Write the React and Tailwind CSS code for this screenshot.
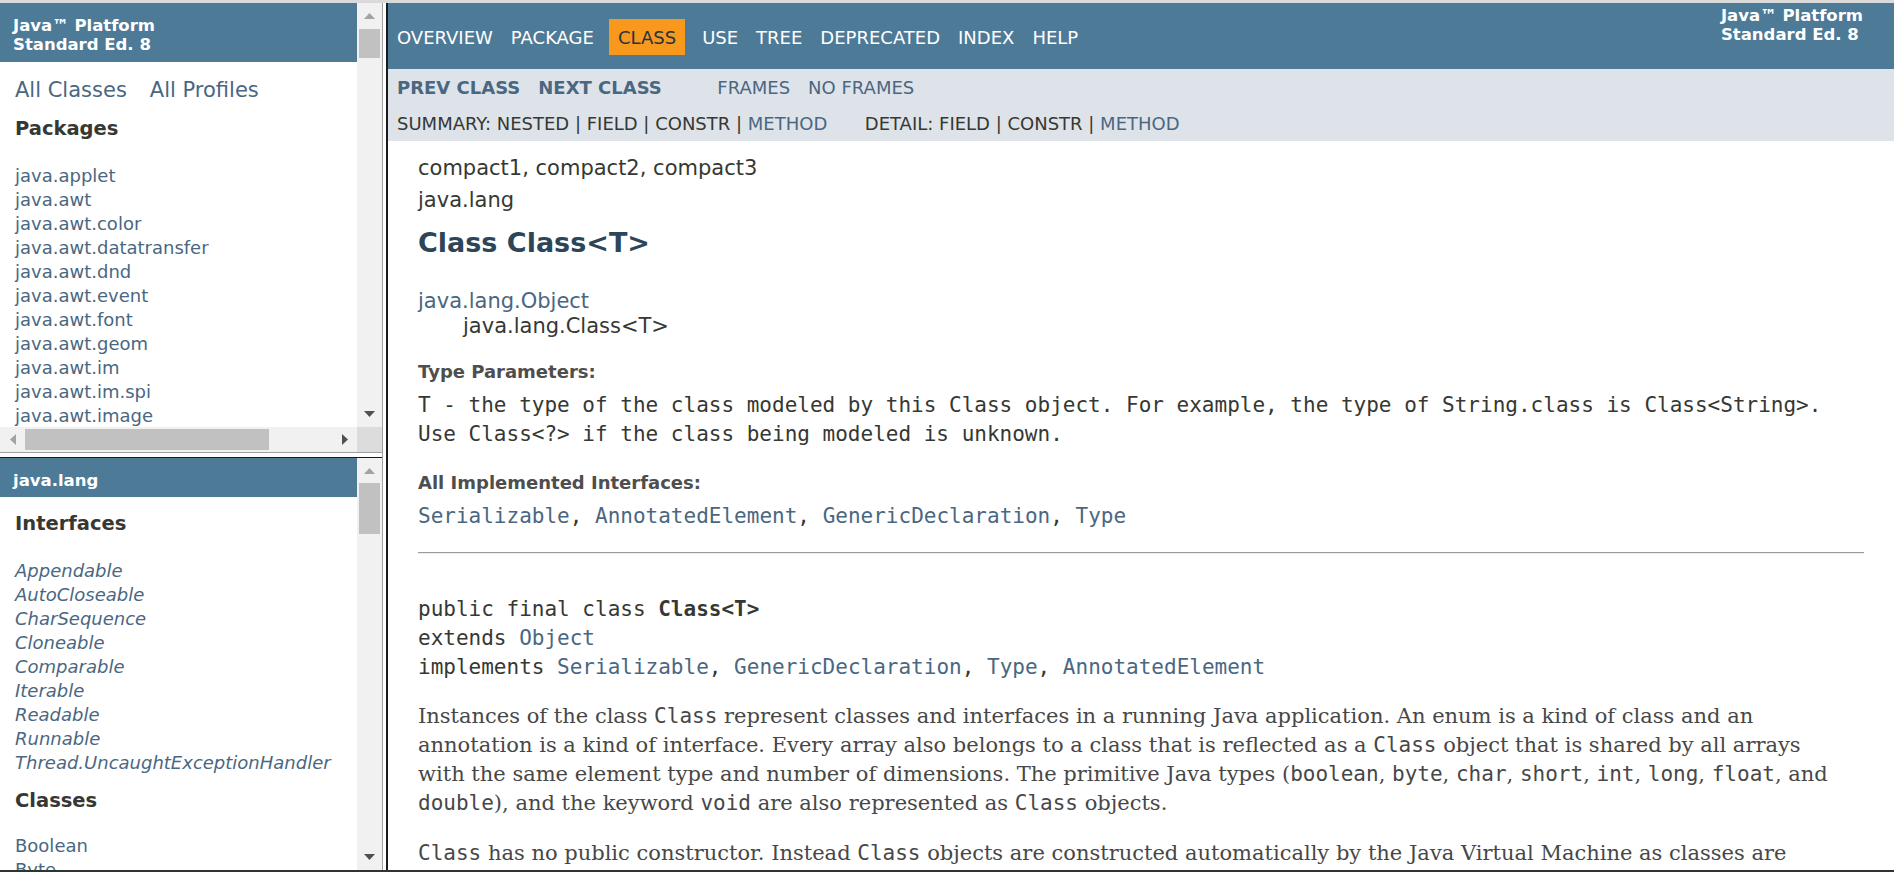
import React from 'react';

const packages = [
  'java.applet',
  'java.awt',
  'java.awt.color',
  'java.awt.datatransfer',
  'java.awt.dnd',
  'java.awt.event',
  'java.awt.font',
  'java.awt.geom',
  'java.awt.im',
  'java.awt.im.spi',
  'java.awt.image',
];

const interfaces = [
  'Appendable',
  'AutoCloseable',
  'CharSequence',
  'Cloneable',
  'Comparable',
  'Iterable',
  'Readable',
  'Runnable',
  'Thread.UncaughtExceptionHandler',
];

const classes = ['Boolean', 'Byte', 'Character'];

const navItems = ['Overview', 'Package', 'Class', 'Use', 'Tree', 'Deprecated', 'Index', 'Help'];

// small scrollbar triangles
const Arrow = ({ dir, dark }) => {
  const fill = dark ? '#505050' : '#a3a3a3';
  if (dir === 'up') return <svg width="11" height="6" viewBox="0 0 11 6"><polygon points="0,6 5.5,0 11,6" fill={fill} /></svg>;
  if (dir === 'down') return <svg width="11" height="6" viewBox="0 0 11 6"><polygon points="0,0 5.5,6 11,0" fill={fill} /></svg>;
  if (dir === 'left') return <svg width="6" height="11" viewBox="0 0 6 11"><polygon points="6,0 0,5.5 6,11" fill={fill} /></svg>;
  return <svg width="6" height="11" viewBox="0 0 6 11"><polygon points="0,0 6,5.5 0,11" fill={fill} /></svg>;
};

const VScroll = ({ thumb }) => (
  <div className="w-[25px] shrink-0 bg-[#f1f1f1] flex flex-col">
    <div className="h-[26px] flex items-center justify-center">
      <Arrow dir="up" />
    </div>
    <div className="flex-1 px-[2px]">
      <div className={thumb + ' bg-[#c1c1c1]'} />
    </div>
    <div className="h-[26px] flex items-center justify-center">
      <Arrow dir="down" dark />
    </div>
  </div>
);

const Code = ({ children, bold }) => (
  <code className={"font-['DejaVu_Sans_Mono',monospace] text-[21px] " + (bold ? 'font-bold' : '')}>{children}</code>
);

const LeftTop = () => (
  <div className="h-[449px] flex flex-col bg-white">
    <div className="flex flex-1 min-h-0">
      <div className="flex-1 overflow-hidden">
        <div className="bg-[#4d7a97] text-white font-bold text-[16.5px] leading-[19px] pt-[13px] pb-[7px] pl-[13px] h-[59px]">
          <div>Java™ Platform</div>
          <div>Standard Ed. 8</div>
        </div>
        <div className="pl-[15px] pt-[15.5px] text-[21px] leading-[24px] text-[#4a6782] flex gap-[23px]">
          <span>All Classes</span>
          <span>All Profiles</span>
        </div>
        <h2 className="pl-[15px] mt-[15px] text-[19.5px] leading-[23px] font-bold text-[#353833]">Packages</h2>
        <ul className="pl-[15px] mt-[24px] text-[18px] leading-[24px] text-[#4a6782]">
          {packages.map((p) => (
            <li key={p}>{p}</li>
          ))}
        </ul>
      </div>
      <VScroll thumb="h-[29px]" />
    </div>
    <div className="h-[25px] flex bg-[#f1f1f1]">
      <div className="w-[25px] flex items-center justify-center">
        <Arrow dir="left" />
      </div>
      <div className="w-[244px] py-[2px]">
        <div className="h-full bg-[#c1c1c1]" />
      </div>
      <div className="flex-1" />
      <div className="w-[25px] flex items-center justify-center">
        <Arrow dir="right" dark />
      </div>
      <div className="w-[25px] bg-[#dcdcdc]" />
    </div>
  </div>
);

const LeftBottom = () => (
  <div className="flex-1 flex min-h-0 bg-white">
    <div className="flex-1 overflow-hidden">
      <div className="bg-[#4d7a97] text-white font-bold text-[16.5px] leading-[19px] pt-[13px] pl-[13px] h-[39px]">java.lang</div>
      <h2 className="pl-[15px] mt-[15px] text-[19.5px] leading-[23px] font-bold text-[#353833]">Interfaces</h2>
      <ul className="pl-[15px] mt-[24px] text-[18px] leading-[24px] text-[#4a6782] italic">
        {interfaces.map((p) => (
          <li key={p}>{p}</li>
        ))}
      </ul>
      <h2 className="pl-[15px] mt-[14px] text-[19.5px] leading-[23px] font-bold text-[#353833]">Classes</h2>
      <ul className="pl-[15px] mt-[22px] text-[18px] leading-[24px] text-[#4a6782]">
        {classes.map((p) => (
          <li key={p}>{p}</li>
        ))}
      </ul>
    </div>
    <VScroll thumb="mt-[-1px] h-[51px]" />
  </div>
);

const TopNav = () => (
  <div className="bg-[#4d7a97] h-[66px] flex justify-between text-white shrink-0">
    <ul className="flex pt-[16px] text-[18px] leading-[21px] uppercase">
      {navItems.map((n) =>
        n === 'Class' ? (
          <li key={n} className="px-[9px] py-[7.5px] h-[36px] ml-[6px] mr-[8px] bg-[#f8981d] text-[#253441]">
            {n}
          </li>
        ) : (
          <li key={n} className="px-[9px] py-[7.5px] h-[36px]">
            {n}
          </li>
        )
      )}
    </ul>
    <div className="mt-[2.5px] mr-[31px] font-bold text-[16.5px] leading-[19px]">
      <div>Java™ Platform</div>
      <div>Standard Ed. 8</div>
    </div>
  </div>
);

const SubNav = () => (
  <div className="bg-[#dee3e9] h-[72px] shrink-0 text-[18px] leading-[21px] uppercase">
    <div className="h-[36px] flex items-center">
      <ul className="flex mr-[37.5px] font-bold text-[#4a6782]">
        <li className="px-[9px]">Prev Class</li>
        <li className="px-[9px]">Next Class</li>
      </ul>
      <ul className="flex text-[#4a6782]">
        <li className="px-[9px]">Frames</li>
        <li className="px-[9px]">No Frames</li>
      </ul>
    </div>
    <div className="pt-[8px] pl-[9px] flex text-[#353833] whitespace-pre">
      <div className="mr-[37.5px]">
        Summary: Nested | Field | Constr | <span className="text-[#4a6782]">Method</span>
      </div>
      <div>
        Detail: Field | Constr | <span className="text-[#4a6782]">Method</span>
      </div>
    </div>
  </div>
);

const Content = () => (
  <div className="flex-1 overflow-hidden px-[30px] text-[#353833]">
    <div className="mt-[15px] text-[21px] leading-[24px]">compact1, compact2, compact3</div>
    <div className="mt-[8px] text-[21px] leading-[24px]">java.lang</div>
    <h2 className="mt-[14.5px] text-[27px] leading-[31px] font-bold text-[#2c4557]">Class Class&lt;T&gt;</h2>

    <div className="mt-[31px] text-[21px] leading-[24px] text-[#4a6782]">java.lang.Object</div>
    <div className="mt-[1px] pl-[45px] text-[21px] leading-[24px]">java.lang.Class&lt;T&gt;</div>

    <div className="mt-[23px] text-[18px] leading-[21px] font-bold text-[#4e4e4e]">Type Parameters:</div>
    <div className="mt-[9px] font-['DejaVu_Sans_Mono',monospace] text-[21px] leading-[29px] whitespace-pre">
      <div>T - the type of the class modeled by this Class object. For example, the type of String.class is Class&lt;String&gt;.</div>
      <div>Use Class&lt;?&gt; if the class being modeled is unknown.</div>
    </div>

    <div className="mt-[23px] text-[18px] leading-[21px] font-bold text-[#4e4e4e]">All Implemented Interfaces:</div>
    <div className="mt-[9px] font-['DejaVu_Sans_Mono',monospace] text-[21px] leading-[29px] whitespace-pre">
      <span className="text-[#4a6782]">Serializable</span>, <span className="text-[#4a6782]">AnnotatedElement</span>,{' '}
      <span className="text-[#4a6782]">GenericDeclaration</span>, <span className="text-[#4a6782]">Type</span>
    </div>

    <hr className="mt-[21px] border-t border-t-[#9a9a9a] border-b border-b-[#eeeeee]" />

    <pre className="mt-[41.5px] font-['DejaVu_Sans_Mono',monospace] text-[21px] leading-[29px] text-[#353833]">
      <div>
        public final class <span className="font-bold">Class&lt;T&gt;</span>
      </div>
      <div>
        extends <span className="text-[#4a6782]">Object</span>
      </div>
      <div>
        implements <span className="text-[#4a6782]">Serializable</span>, <span className="text-[#4a6782]">GenericDeclaration</span>,{' '}
        <span className="text-[#4a6782]">Type</span>, <span className="text-[#4a6782]">AnnotatedElement</span>
      </div>
    </pre>

    <div className="mt-[20px] font-['DejaVu_Serif',Georgia,serif] text-[21px] leading-[29px] text-[#474747] whitespace-nowrap">
      <div>
        Instances of the class <Code>Class</Code> represent classes and interfaces in a running Java application. An enum is a kind of class and an
      </div>
      <div>
        annotation is a kind of interface. Every array also belongs to a class that is reflected as a <Code>Class</Code> object that is shared by all arrays
      </div>
      <div>
        with the same element type and number of dimensions. The primitive Java types (<Code>boolean</Code>, <Code>byte</Code>, <Code>char</Code>,{' '}
        <Code>short</Code>, <Code>int</Code>, <Code>long</Code>, <Code>float</Code>, and
      </div>
      <div>
        <Code>double</Code>), and the keyword <Code>void</Code> are also represented as <Code>Class</Code> objects.
      </div>
    </div>
    <div className="mt-[21px] font-['DejaVu_Serif',Georgia,serif] text-[21px] leading-[29px] text-[#474747] whitespace-nowrap">
      <Code>Class</Code> has no public constructor. Instead <Code>Class</Code> objects are constructed automatically by the Java Virtual Machine as classes are
    </div>
  </div>
);

export default function App() {
  return (
    <div className="w-[1894px] h-[872px] overflow-hidden flex flex-col bg-white font-['DejaVu_Sans',Arial,sans-serif]">
      <div className="h-[3px] bg-[#dadada] shrink-0" />
      <div className="flex flex-1 min-h-0">
        {/* left frames */}
        <div className="w-[382px] shrink-0 flex flex-col">
          <LeftTop />
          <div className="h-[6px] shrink-0 bg-white border-t border-t-[#a0a0a0] border-b border-b-[#1a1a1a]" />
          <LeftBottom />
        </div>
        {/* frame divider */}
        <div className="w-[6px] shrink-0 bg-white border-l border-l-[#a0a0a0] border-r-2 border-r-[#1a1a1a]" />
        {/* class frame */}
        <div className="flex-1 flex flex-col min-w-0">
          <TopNav />
          <SubNav />
          <Content />
        </div>
      </div>
      <div className="h-[2px] bg-[#2e352c] shrink-0" />
    </div>
  );
}
